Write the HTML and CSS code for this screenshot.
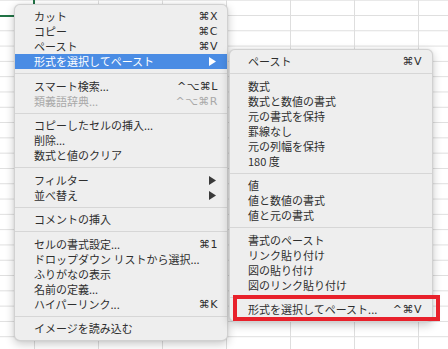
FILE: index.html
```html
<!DOCTYPE html>
<html lang="ja">
<head>
<meta charset="utf-8">
<link rel="stylesheet" href="styles.css">
</head>
<body>
<div class="sheet">
  <div class="cell-sel"></div>

  <div class="menu main">
    <div class="item"><span>カット</span><span class="sc">⌘X</span></div>
    <div class="item"><span>コピー</span><span class="sc">⌘C</span></div>
    <div class="item"><span>ペースト</span><span class="sc">⌘V</span></div>
    <div class="item active"><span>形式を選択してペースト</span><svg class="arrow" width="7" height="9" viewBox="0 0 7 9"><path d="M0 0 L7 4.5 L0 9 Z"/></svg></div>
    <div class="sep"></div>
    <div class="item"><span>スマート検索...</span><span class="sc">^⌥⌘L</span></div>
    <div class="item disabled"><span>類義語辞典...</span><span class="sc">^⌥⌘R</span></div>
    <div class="sep"></div>
    <div class="item"><span>コピーしたセルの挿入...</span></div>
    <div class="item"><span>削除...</span></div>
    <div class="item"><span>数式と値のクリア</span></div>
    <div class="sep"></div>
    <div class="item"><span>フィルター</span><svg class="arrow" width="7" height="9" viewBox="0 0 7 9"><path d="M0 0 L7 4.5 L0 9 Z"/></svg></div>
    <div class="item"><span>並べ替え</span><svg class="arrow" width="7" height="9" viewBox="0 0 7 9"><path d="M0 0 L7 4.5 L0 9 Z"/></svg></div>
    <div class="sep"></div>
    <div class="item"><span>コメントの挿入</span></div>
    <div class="sep"></div>
    <div class="item"><span>セルの書式設定...</span><span class="sc">⌘1</span></div>
    <div class="item"><span>ドロップダウン リストから選択...</span></div>
    <div class="item"><span>ふりがなの表示</span></div>
    <div class="item"><span>名前の定義...</span></div>
    <div class="item"><span>ハイパーリンク...</span><span class="sc">⌘K</span></div>
    <div class="sep"></div>
    <div class="item"><span>イメージを読み込む</span></div>
  </div>

  <div class="menu sub">
    <div class="item"><span>ペースト</span><span class="sc">⌘V</span></div>
    <div class="sep"></div>
    <div class="item"><span>数式</span></div>
    <div class="item"><span>数式と数値の書式</span></div>
    <div class="item"><span>元の書式を保持</span></div>
    <div class="item"><span>罫線なし</span></div>
    <div class="item"><span>元の列幅を保持</span></div>
    <div class="item"><span>180 度</span></div>
    <div class="sep"></div>
    <div class="item"><span>値</span></div>
    <div class="item"><span>値と数値の書式</span></div>
    <div class="item"><span>値と元の書式</span></div>
    <div class="sep"></div>
    <div class="item"><span>書式のペースト</span></div>
    <div class="item"><span>リンク貼り付け</span></div>
    <div class="item"><span>図の貼り付け</span></div>
    <div class="item"><span>図のリンク貼り付け</span></div>
    <div class="sep"></div>
    <div class="item"><span>形式を選択してペースト...</span><span class="sc">^⌘V</span></div>
  </div>

  <div class="highlight-box"></div>
</div>
</body>
</html>
```

FILE: styles.css
```css
html, body {
  margin: 0;
  padding: 0;
}

body {
  width: 448px;
  height: 349px;
  overflow: hidden;
  background: #ffffff;
  font-family: "Noto Sans CJK JP", "Noto Sans", "DejaVu Sans", sans-serif;
}

.sheet {
  position: relative;
  width: 448px;
  height: 349px;
  background-color: #ffffff;
  background-image:
    linear-gradient(to right, #dedede 0, #dedede 1px, transparent 1px),
    linear-gradient(to bottom, #dedede 0, #dedede 1px, transparent 1px);
  background-size: 64px 100%, 100% 15.3px;
  background-position: 34px 0, 0 15px;
}

.cell-sel {
  position: absolute;
  left: -2px;
  top: -2px;
  width: 33px;
  height: 15px;
  border: 2px solid #217346;
}

.menu {
  position: absolute;
  box-sizing: border-box;
  padding: 4px 0;
  background: #eeeeee;
  border: 0.5px solid rgba(0, 0, 0, 0.12);
  border-radius: 6px;
  box-shadow: 0 3px 10px rgba(0, 0, 0, 0.22), 0 0 2px rgba(0, 0, 0, 0.1);
  color: #2e2e2e;
  font-size: 11px;
}

.main {
  left: 14px;
  top: 4px;
  width: 214px;
}

.sub {
  left: 229px;
  top: 49px;
  width: 204px;
}

.item {
  display: flex;
  align-items: center;
  justify-content: space-between;
  height: 15px;
  line-height: 15px;
  padding: 0 9px 0 19px;
  white-space: nowrap;
}

.sub .item {
  padding: 0 10px 0 18px;
}

.item.active {
  background: #4a8ce4;
  color: #ffffff;
}

.item.disabled {
  color: #a9a9a9;
}

.sc {
  font-family: "DejaVu Sans", "Noto Sans CJK JP", sans-serif;
  font-size: 11px;
  letter-spacing: 0.5px;
}

.arrow {
  fill: #3a3a3a;
  margin-right: 2px;
}

.item.active .arrow {
  fill: #ffffff;
}

.sep {
  height: 1px;
  margin: 4px 0 4.5px;
  background: #d6d6d6;
}

.highlight-box {
  position: absolute;
  left: 233px;
  top: 295px;
  width: 207px;
  height: 26px;
  box-sizing: border-box;
  border: 4px solid #e8212b;
}
```
